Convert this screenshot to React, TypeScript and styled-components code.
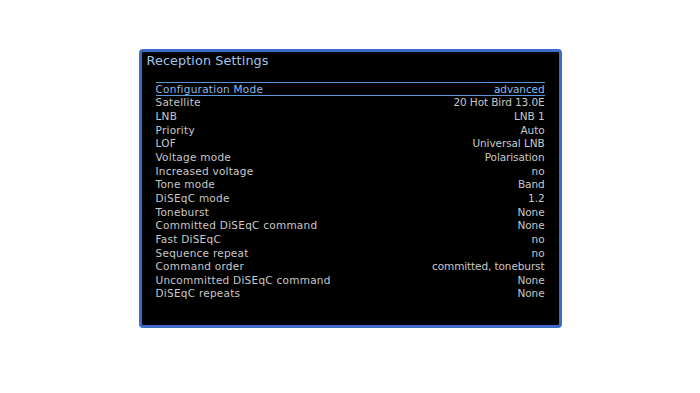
import React from "react";
import styled, { createGlobalStyle } from "styled-components";

const GlobalStyle = createGlobalStyle`
  html, body {
    margin: 0;
    padding: 0;
    background: #ffffff;
  }
`;

const Page = styled.div`
  width: 700px;
  height: 393px;
  display: flex;
  justify-content: center;
  align-items: flex-start;
  padding-top: 49px;
  box-sizing: border-box;
`;

const Panel = styled.section`
  width: 423px;
  height: 279px;
  box-sizing: border-box;
  background: #000000;
  border: 3px solid #3b6cc6;
  border-radius: 4px;
  padding: 0 14px 0 5px;
  font-family: "DejaVu Sans", sans-serif;
`;

const Title = styled.h1`
  margin: 0;
  font-size: 12.8px;
  font-weight: normal;
  line-height: 18px;
  color: #a3c4ea;
  letter-spacing: 0.1px;
`;

const List = styled.ul`
  list-style: none;
  margin: 12px 0 0 9px;
  padding: 0;
  display: flex;
  flex-direction: column;
`;

const Row = styled.li<{ $selected?: boolean }>`
  display: flex;
  justify-content: space-between;
  align-items: center;
  height: 13.65px;
  box-sizing: border-box;
  font-size: 10.5px;
  color: ${(p) => (p.$selected ? "#8fb9ea" : "#c8c8c8")};
  border-top: 1px solid ${(p) => (p.$selected ? "#5a98d8" : "transparent")};
  border-bottom: 1px solid ${(p) => (p.$selected ? "#5a98d8" : "transparent")};
`;

const Label = styled.span`
  white-space: nowrap;
  letter-spacing: 0.25px;
`;

const Value = styled.span`
  white-space: nowrap;
  text-align: right;
  letter-spacing: -0.1px;
`;

const settings: [string, string][] = [
  ["Configuration Mode", "advanced"],
  ["Satellite", "20 Hot Bird 13.0E"],
  ["LNB", "LNB 1"],
  ["Priority", "Auto"],
  ["LOF", "Universal LNB"],
  ["Voltage mode", "Polarisation"],
  ["Increased voltage", "no"],
  ["Tone mode", "Band"],
  ["DiSEqC mode", "1.2"],
  ["Toneburst", "None"],
  ["Committed DiSEqC command", "None"],
  ["Fast DiSEqC", "no"],
  ["Sequence repeat", "no"],
  ["Command order", "committed, toneburst"],
  ["Uncommitted DiSEqC command", "None"],
  ["DiSEqC repeats", "None"],
];

export default function App() {
  return (
    <Page>
      <GlobalStyle />
      <Panel>
        <Title>Reception Settings</Title>
        <List>
          {settings.map(([label, value], i) => (
            <Row key={label} $selected={i === 0}>
              <Label>{label}</Label>
              <Value>{value}</Value>
            </Row>
          ))}
        </List>
      </Panel>
    </Page>
  );
}
